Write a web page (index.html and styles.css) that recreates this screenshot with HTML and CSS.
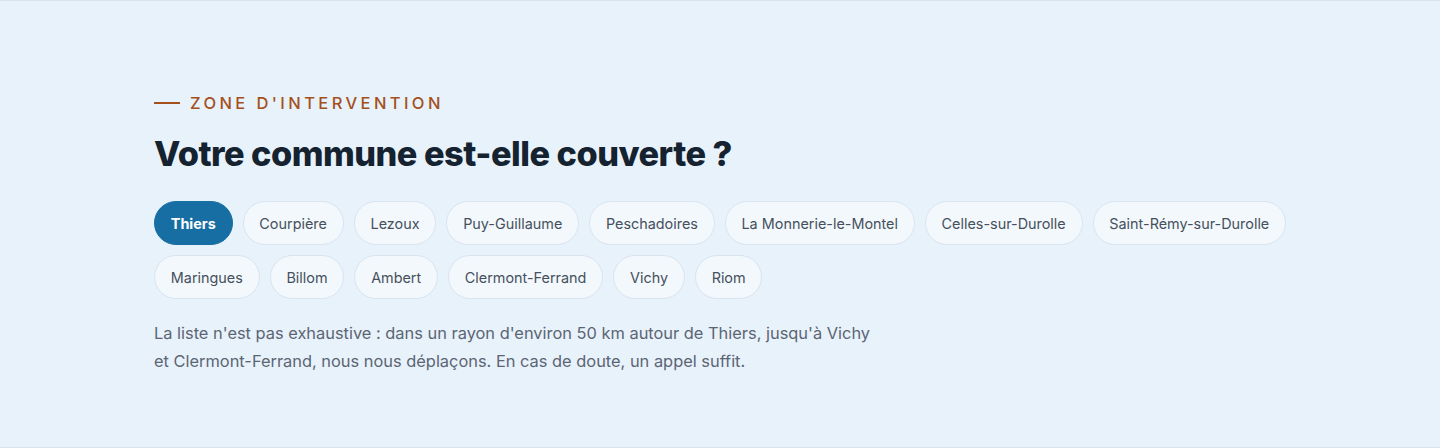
FILE: index.html
```html
<!DOCTYPE html>
<html lang="fr">
<head>
    <meta charset="UTF-8">
    <meta name="viewport" content="width=device-width, initial-scale=1.0">
    <title>Zone d'intervention</title>
    <link rel="stylesheet" href="styles.css">
</head>
<body>

    <section class="zone">
        <div class="zone-inner">
            <!-- Eyebrow -->
            <p class="eyebrow"><span class="eyebrow-line"></span>Zone d'intervention</p>

            <h2 class="zone-title">Votre commune est-elle couverte ?</h2>

            <!-- Communes -->
            <ul class="chips">
                <li class="chip active">Thiers</li>
                <li class="chip">Courpière</li>
                <li class="chip">Lezoux</li>
                <li class="chip">Puy-Guillaume</li>
                <li class="chip">Peschadoires</li>
                <li class="chip">La Monnerie-le-Montel</li>
                <li class="chip">Celles-sur-Durolle</li>
                <li class="chip">Saint-Rémy-sur-Durolle</li>
                <li class="chip">Maringues</li>
                <li class="chip">Billom</li>
                <li class="chip">Ambert</li>
                <li class="chip">Clermont-Ferrand</li>
                <li class="chip">Vichy</li>
                <li class="chip">Riom</li>
            </ul>

            <p class="zone-note">
                La liste n'est pas exhaustive : dans un rayon d'environ 50 km autour de Thiers, jusqu'à Vichy
                et Clermont-Ferrand, nous nous déplaçons. En cas de doute, un appel suffit.
            </p>
        </div>
    </section>

</body>
</html>
```

FILE: styles.css
```css
body {
    margin: 0;
    font-family: Inter, "Noto Sans", sans-serif;
    background-color: #e8f2fb;
}

.zone {
    height: 446px;
    border-top: 1px solid #dbe5ef;
    border-bottom: 1px solid #dbe5ef;
    background-color: #e8f2fb;
}

.zone-inner {
    max-width: 1150px;
    margin-left: 154px;
    padding-top: 92px;
}

.eyebrow {
    display: flex;
    align-items: center;
    gap: 10px;
    margin: 0;
    font-size: 16.5px;
    line-height: 20px;
    font-weight: 500;
    letter-spacing: 3.4px;
    text-transform: uppercase;
    color: #a4501c;
}

.eyebrow-line {
    width: 26px;
    height: 2px;
    background-color: #a4501c;
}

.zone-title {
    margin: 19px 0 0;
    font-size: 34.3px;
    line-height: 44px;
    font-weight: 800;
    letter-spacing: -0.5px;
    color: #152230;
}

.chips {
    display: flex;
    flex-wrap: wrap;
    gap: 10px;
    list-style: none;
    margin: 25px 0 0;
    padding: 0;
}

.chip {
    height: 42px;
    padding: 0 15.8px;
    display: flex;
    align-items: center;
    font-size: 14.4px;
    color: #46505c;
    background-color: #f3f8fd;
    border: 1px solid #d8e4f0;
    border-radius: 22px;
}

.chip.active {
    background-color: #176ea3;
    border-color: #176ea3;
    color: #ffffff;
    font-weight: 700;
}

.zone-note {
    max-width: 730px;
    margin: 20px 0 0;
    font-size: 16.4px;
    line-height: 28px;
    color: #5b6573;
}
```
